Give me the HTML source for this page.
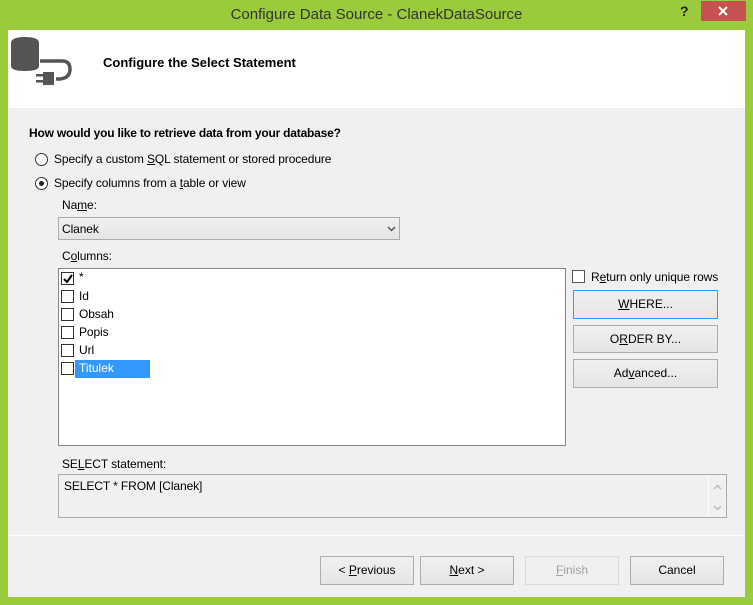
<!DOCTYPE html>
<html><head><style>
*{box-sizing:border-box;margin:0;padding:0}
body{width:753px;height:605px;background:#9ACB3C;font-family:"Liberation Sans",sans-serif;font-size:12px;color:#000;position:relative;overflow:hidden}
.abs{position:absolute}
.title{left:0;top:6px;width:753px;text-align:center;font-size:15px;color:#333}
.content{left:8px;top:30px;width:737px;height:567px;background:#F0F0F0}
.header{left:8px;top:30px;width:737px;height:78px;background:#fff}
.btn{position:absolute;background:linear-gradient(#F0F0F0,#E5E5E5);border:1px solid #ADADAD;text-align:center;font-size:12px;color:#000}
u{text-decoration:underline}
.cb{position:absolute;width:13px;height:13px;border:1px solid #333;background:#fff}
.lbl{position:absolute;font-size:12px;letter-spacing:-0.1px}
</style></head><body>
<div class="abs title">Configure Data Source - ClanekDataSource</div>
<div class="abs" style="left:680px;top:3px;font-size:14px;font-weight:bold;color:#222">?</div>
<div class="abs" style="left:701px;top:1px;width:45px;height:20px;background:#C75050"></div>
<svg class="abs" style="left:718px;top:6px" width="10" height="10"><path d="M1 1L9 9M9 1L1 9" stroke="#fff" stroke-width="2"/></svg>
<div class="abs content"></div>
<div class="abs header"></div>
<svg class="abs" style="left:10px;top:36px" width="62" height="52" viewBox="0 0 62 52">
<path d="M1 7 Q1 1 15 1 Q29 1 29 7 V30 Q29 35 15 35 Q1 35 1 30 Z" fill="#555"/>
<path d="M30 25 H52 Q60 25 60 33 Q60 42 50 43 H46" fill="none" stroke="#555" stroke-width="3.5"/>
<rect x="33" y="36" width="11" height="13" fill="#555"/>
<rect x="26" y="38" width="7" height="2.5" fill="#555"/>
<rect x="26" y="44" width="7" height="2.5" fill="#555"/>
</svg>
<div class="abs" style="left:103px;top:55px;font-weight:bold;font-size:13px">Configure the Select Statement</div>
<div class="abs" style="left:29px;top:126px;font-weight:bold;letter-spacing:-0.2px">How would you like to retrieve data from your database?</div>
<div class="abs" style="left:35px;top:153px;width:13px;height:13px;border:1px solid #333;border-radius:50%;background:#fff"></div>
<div class="lbl" style="left:54px;top:152px">Specify a custom <u>S</u>QL statement or stored procedure</div>
<div class="abs" style="left:35px;top:177px;width:13px;height:13px;border:1px solid #333;border-radius:50%;background:#fff"><div style="margin:3px;width:5px;height:5px;border-radius:50%;background:#222"></div></div>
<div class="lbl" style="left:54px;top:176px">Specify columns from a <u>t</u>able or view</div>
<div class="lbl" style="left:62px;top:198px">Na<u>m</u>e:</div>
<div class="abs" style="left:58px;top:217px;width:342px;height:23px;border:1px solid #ACACAC;background:linear-gradient(#F0F0F0,#E5E5E5)"></div>
<div class="lbl" style="left:62px;top:222px">Clanek</div>
<svg class="abs" style="left:387px;top:226px" width="9" height="6"><path d="M1 1L4.5 4.5L8 1" fill="none" stroke="#555" stroke-width="1.5"/></svg>
<div class="lbl" style="left:62px;top:249px">C<u>o</u>lumns:</div>
<div class="abs" style="left:58px;top:268px;width:508px;height:178px;background:#fff;border:1px solid #828790"></div>
<div class="cb" style="left:61px;top:272px"><svg style="position:absolute;left:1px;top:1px" width="10" height="10"><path d="M1 5L4 8L9 1" fill="none" stroke="#000" stroke-width="2"/></svg></div><div class="lbl" style="left:79px;top:270px">*</div>
<div class="cb" style="left:61px;top:290px"></div><div class="lbl" style="left:79px;top:289px">Id</div>
<div class="cb" style="left:61px;top:308px"></div><div class="lbl" style="left:79px;top:307px">Obsah</div>
<div class="cb" style="left:61px;top:326px"></div><div class="lbl" style="left:79px;top:325px">Popis</div>
<div class="cb" style="left:61px;top:344px"></div><div class="lbl" style="left:79px;top:343px">Url</div>
<div class="cb" style="left:61px;top:362px"></div>
<div class="abs" style="left:75px;top:360px;width:75px;height:18px;background:#3399FF;color:#fff;padding:1px 0 0 4px">Titulek</div>
<div class="cb" style="left:572px;top:270px;border-color:#555"></div>
<div class="lbl" style="left:591px;top:270px">R<u>e</u>turn only unique rows</div>
<div class="btn" style="left:573px;top:290px;width:145px;height:29px;line-height:27px;border-color:#3399FF"><u>W</u>HERE...</div>
<div class="btn" style="left:573px;top:325px;width:145px;height:28px;line-height:26px">O<u>R</u>DER BY...</div>
<div class="btn" style="left:573px;top:359px;width:145px;height:29px;line-height:27px">Ad<u>v</u>anced...</div>
<div class="lbl" style="left:62px;top:457px">SE<u>L</u>ECT statement:</div>
<div class="abs" style="left:58px;top:474px;width:669px;height:44px;border:1px solid #ABABAB;background:#F0F0F0"></div>
<div class="abs" style="left:708px;top:475px;width:1px;height:42px;background:#fff"></div>
<svg class="abs" style="left:713px;top:484px" width="9" height="6"><path d="M1 5L4.5 1.5L8 5" fill="none" stroke="#bbb" stroke-width="1.5"/></svg>
<svg class="abs" style="left:713px;top:505px" width="9" height="6"><path d="M1 1L4.5 4.5L8 1" fill="none" stroke="#bbb" stroke-width="1.5"/></svg>
<div class="lbl" style="left:64px;top:479px">SELECT * FROM [Clanek]</div>
<div class="abs" style="left:8px;top:535px;width:737px;height:1px;background:#fff"></div>
<div class="btn" style="left:320px;top:556px;width:94px;height:29px;line-height:27px">&lt; <u>P</u>revious</div>
<div class="btn" style="left:420px;top:556px;width:94px;height:29px;line-height:27px"><u>N</u>ext &gt;</div>
<div class="btn" style="left:525px;top:556px;width:94px;height:29px;line-height:27px;border-color:#D9D9D9;color:#A0A0A0;background:#F0F0F0"><u>F</u>inish</div>
<div class="btn" style="left:630px;top:556px;width:94px;height:29px;line-height:27px">Cancel</div>
</body></html>
